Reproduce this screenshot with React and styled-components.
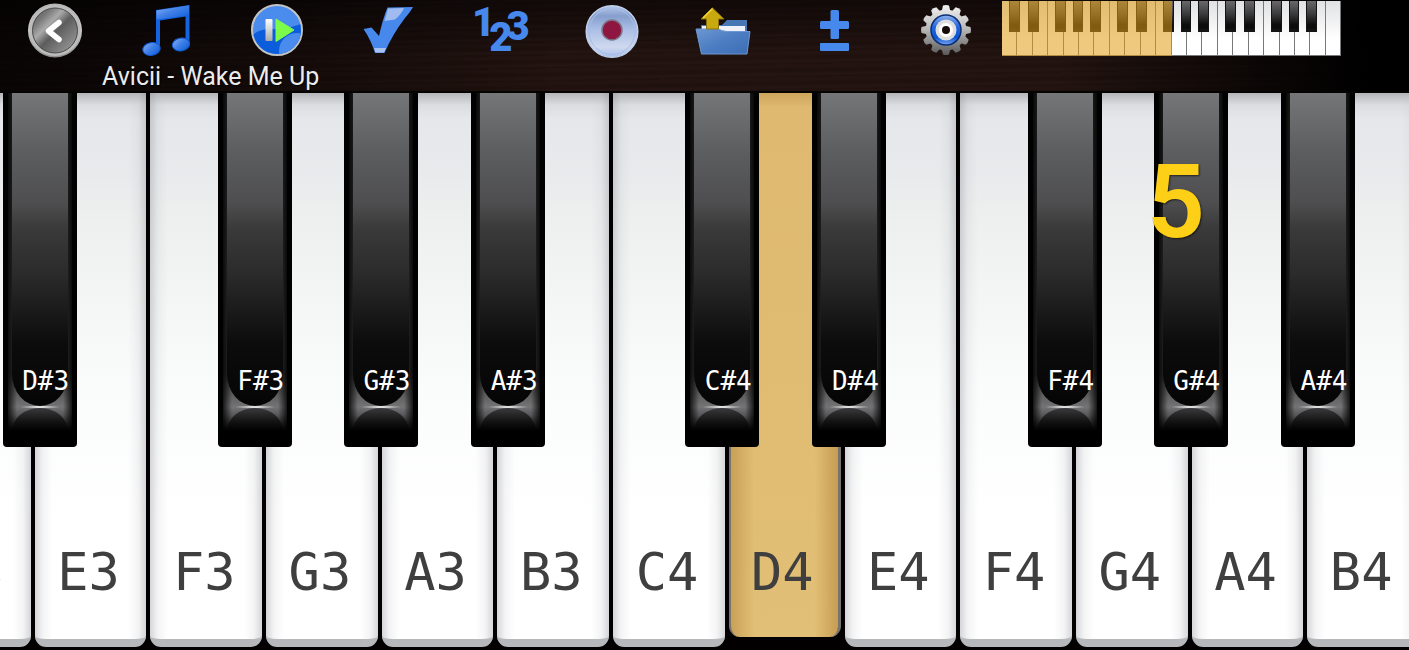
import React, { useState } from "react";
import styled, { createGlobalStyle, css } from "styled-components";

const Global = createGlobalStyle`
  body, html {
    margin: 0;
    background: #000;
  }
  * {
    box-sizing: border-box;
  }
`;

const App_ = styled.main`
  display: flex;
  flex-direction: column;
  min-height: 100vh;
  overflow: hidden;
  font-family: Roboto, sans-serif;
`;

const Header = styled.header`
  height: 93px;
  border-bottom: 2px solid #050202;
  background:
    linear-gradient(90deg, rgba(0, 0, 0, 0.75), rgba(0, 0, 0, 0.4) 22%, transparent 40%, transparent 75%, #000 97%),
    linear-gradient(180deg, rgba(0, 0, 0, 0.5), transparent 60%),
    repeating-linear-gradient(179deg, #231411 0 3px, #1f110e 5px 7px, #251613 10px, #1d100d 13px);
`;

const Toolbar = styled.div`
  display: grid;
  grid-template-columns: 71.1% 24.1% 1fr;
  height: 60px;
`;

const Actions = styled.nav`
  display: grid;
  grid-template-columns: repeat(9, 1fr);
  place-items: center;
`;

const IconButton = styled.button`
  display: flex;
  align-items: center;
  justify-content: center;
  width: 56px;
  height: 56px;
  padding: 0;
  border: none;
  background: transparent;
  cursor: pointer;

  svg {
    display: block;
    width: 56px;
    height: 56px;
    overflow: visible;
  }
`;

const Digits = styled.span`
  display: flex;
  font: 900 40px/40px Roboto, sans-serif;
  color: #4688ec;
`;

const Digit = styled.span`
  margin: ${({ $drop }) => $drop}px -3px 0;
`;

const Title = styled.h1`
  margin: 0 0 0 102px;
  font-size: 25px;
  font-weight: 400;
  line-height: 34px;
  color: #ececec;
  text-shadow: 1px 1px 1px #000;
`;

const Overview = styled.div`
  position: relative;
  display: grid;
  grid-template-columns: repeat(22, 1fr);
  height: 55px;
  margin-top: 1px;
`;

const MiniKey = styled.div`
  position: relative;
  border: solid #77797c;
  border-width: 0 1px 1px 0;
  background: linear-gradient(#e0e1e3, #fff 70%);
`;

const MiniSharp = styled.div`
  position: absolute;
  z-index: 1;
  top: 0;
  left: ${({ $left }) => $left}%;
  width: 72%;
  height: 57%;
  border: solid #141414;
  border-width: 0 1px 3px;
  background: linear-gradient(#69696b, #3c3c3e 45%, #0c0c0c 85%);
`;

const Range = styled.div`
  position: absolute;
  z-index: 2;
  inset: 0 50% 0 0;
  background: rgba(226, 158, 20, 0.55);
`;

const Board = styled.section`
  flex: 1;
  display: grid;
  grid-template-columns: repeat(13, 1fr);
  margin: 0 -12px 0 -83px;
  background: #020000;
`;

const Cell = styled.div`
  position: relative;
  display: flex;
  padding: 0 2px 3px;
`;

const pressed = css`
  height: calc(100% - 10px);
  padding-bottom: 35px;
  border: solid #77746d;
  border-width: 0 3px 0 2px;
  background:
    linear-gradient(90deg, rgba(170, 125, 50, 0.45), transparent 22%, transparent 78%, rgba(170, 125, 50, 0.5)),
    linear-gradient(#cda55c, #deb96f 14px, #e2bf76);
`;

const WhiteKey = styled.button`
  display: flex;
  flex-direction: column;
  justify-content: flex-end;
  width: 100%;
  padding: 0 4px 37px 0;
  border: none;
  border-bottom: 8px solid #b6b8bb;
  border-radius: 0 0 11px 11px;
  background:
    linear-gradient(90deg, rgba(150, 152, 160, 0.4), rgba(190, 192, 198, 0.18) 7%, transparent 16%, transparent 84%, rgba(190, 192, 198, 0.18) 93%, rgba(150, 152, 160, 0.4)),
    linear-gradient(#b4b5b8, #dcdde0 12px, #e6e7ea 26px, #e9eaec 80px, #eef0ef 130px, #fafbfb 290px, #fff 420px);
  font: 400 52px/60px "DejaVu Sans Mono", monospace;
  text-align: center;
  color: #3f3f3f;
  cursor: pointer;
  ${({ $down }) => $down && pressed}

  span {
    display: block;
    width: 100%;
  }
`;

const BlackKey = styled.button`
  position: absolute;
  z-index: 2;
  top: 0;
  left: ${({ $left }) => $left}%;
  display: flex;
  flex-direction: column;
  width: 64%;
  height: 63.6%;
  padding: 0 5px 16px;
  border: none;
  border-radius: 0 0 4px 4px;
  background: #000;
  cursor: pointer;
`;

const Bevel = styled.span`
  flex: 1;
  display: flex;
  flex-direction: column;
  padding: 0 4px;
  background:
    linear-gradient(90deg, rgba(0, 0, 0, 0.8), transparent 14%, transparent 86%, rgba(0, 0, 0, 0.8)),
    linear-gradient(#2a2a2a, #383838 200px, #333 280px, #747476 314px, #58585a 322px, #000);
`;

const Top = styled.span`
  flex: 1;
  display: flex;
  align-items: flex-end;
  justify-content: center;
  padding: 0 0 9px 12px;
  border-radius: 0 0 28px 28px / 0 0 32px 32px;
  background: linear-gradient(#757678, #5c5d5f 60px, #4e4e50 110px, #3a3a3a 135px, #2b2b2b 180px, #0c0c0c 250px, #050505);
  font: 400 26px/32px "DejaVu Sans Mono", monospace;
  white-space: nowrap;
  color: #fff;
`;

const Glint = styled.span`
  height: 2px;
  background: linear-gradient(90deg, transparent 15%, #ddd 45%, #ddd 55%, transparent 85%);
`;

const Dome = styled.span`
  height: 23px;
  border-radius: 50% 50% 0 0 / 100% 100% 0 0;
  background: linear-gradient(#3a3a3c, #121212 60%, #000);
`;

const Finger = styled.span`
  position: absolute;
  top: 58px;
  left: -7px;
  font: 600 102px/102px Roboto, sans-serif;
  color: #fdd017;
  text-shadow: 1px 1px 2px rgba(0, 0, 0, 0.6);
`;

const BackIcon = () => (
  <svg viewBox="0 0 56 56">
    <defs>
      <linearGradient id="steel" x1="0" y1="0" x2="1" y2="1">
        <stop offset="0" stopColor="#4c4c4c" />
        <stop offset=".25" stopColor="#777" />
        <stop offset=".38" stopColor="#aaa" />
        <stop offset=".52" stopColor="#5c5c5c" />
        <stop offset=".8" stopColor="#8e8e8e" />
        <stop offset="1" stopColor="#555" />
      </linearGradient>
      <linearGradient id="rim" x1="0" y1="0" x2="0" y2="1">
        <stop offset="0" stopColor="#b4b4b4" />
        <stop offset=".5" stopColor="#c9c9c9" />
        <stop offset="1" stopColor="#8e8e8e" />
      </linearGradient>
    </defs>
    <circle cx="27" cy="28.500" r="26" fill="url(#steel)" stroke="url(#rim)" strokeWidth="2" />
    <circle cx="27" cy="28.500" r="24" fill="none" stroke="#bdbdbd" strokeWidth="3" />
    <circle cx="27" cy="28.500" r="22.500" fill="none" stroke="#4b4b4b" strokeWidth="1" />
    <path d="M31 20.500 20.500 29 31 37.500" fill="none" stroke="#fff" strokeWidth="5.500" strokeLinecap="round" strokeLinejoin="round" />
  </svg>
);

const MusicIcon = () => (
  <svg viewBox="0 0 56 56">
    <defs>
      <linearGradient id="note" x1="0" y1="0" x2="1" y2="1">
        <stop offset="0" stopColor="#8fb2f2" />
        <stop offset=".45" stopColor="#4181e8" />
        <stop offset="1" stopColor="#0b5bd8" />
      </linearGradient>
    </defs>
    <path d="M17 8 50.500 3V42h-4V14.500L21 18.500V47h-4z" fill="#1463df" />
    <path d="M17.500 8.500 50 3.500V13L17.500 17.500z" fill="url(#note)" />
    <ellipse cx="12.500" cy="47" rx="8.800" ry="6.300" fill="url(#note)" stroke="#0d58cf" strokeWidth="1" transform="rotate(-10 12.500 47)" />
    <ellipse cx="42" cy="42.500" rx="8.800" ry="6.300" fill="url(#note)" stroke="#0d58cf" strokeWidth="1" transform="rotate(-10 42 42.500)" />
  </svg>
);

const PlayIcon = () => (
  <svg viewBox="0 0 56 56">
    <defs>
      <clipPath id="disc"><circle cx="27" cy="28" r="24" /></clipPath>
      <linearGradient id="bar" x1="0" y1="0" x2="0" y2="1">
        <stop offset="0" stopColor="#fff" />
        <stop offset="1" stopColor="#aaa" />
      </linearGradient>
    </defs>
    <circle cx="27" cy="28" r="25" fill="#4a8bee" stroke="#c3c3c3" strokeWidth="2" />
    <g clipPath="url(#disc)">
      <path d="M0 36C8 26 18 27 27 27S44 24 54 21V56H0z" fill="#0b5ddb" />
      <circle cx="47" cy="49" r="18" fill="#4a8bee" />
    </g>
    <rect x="15.500" y="17" width="7" height="22" rx="1" fill="url(#bar)" />
    <path d="M26 17 44 28 26 39.500z" fill="#7dfb4a" stroke="#7dfb4a" strokeWidth="1" strokeLinejoin="round" />
  </svg>
);

const CheckIcon = () => (
  <svg viewBox="0 0 56 56">
    <path d="M1.500 27 9.500 25.500 17 34Q21 16 25.500 5.500L51 5Q49 9 43 16Q30 33 22.500 51H13Q9 38 1.500 27z" fill="#4688ec" />
    <path d="M26 6.500 42 6Q39 13 33 17.500L22.500 19z" fill="#a9c1ef" opacity=".9" />
    <path d="M12 46H24L22 50.500H13.500z" fill="#a9c1ef" />
  </svg>
);

const RecordIcon = () => (
  <svg viewBox="0 0 56 56">
    <defs>
      <linearGradient id="glass" x1="0" y1="0" x2="0" y2="1">
        <stop offset="0" stopColor="#b4c8ee" />
        <stop offset=".2" stopColor="#879fcd" />
        <stop offset=".45" stopColor="#a9bde6" />
        <stop offset=".8" stopColor="#cfd9ef" />
        <stop offset="1" stopColor="#a6bdeb" />
      </linearGradient>
    </defs>
    <circle cx="28" cy="29.500" r="25.800" fill="url(#glass)" stroke="#c2cfea" strokeWidth="1.500" />
    <circle cx="28" cy="29.500" r="23" fill="none" stroke="#a9bde6" strokeWidth="1" />
    <circle cx="28" cy="28" r="10" fill="#8d1740" stroke="#7e7489" strokeWidth="1.500" />
  </svg>
);

const FolderIcon = () => (
  <svg viewBox="0 0 56 56">
    <defs>
      <linearGradient id="folder" x1="0" y1="0" x2="1" y2="1">
        <stop offset="0" stopColor="#6c97d2" />
        <stop offset=".5" stopColor="#4c7dc2" />
        <stop offset="1" stopColor="#3d6cb2" />
      </linearGradient>
    </defs>
    <path d="M5 23H26L31 18H51V34H5z" fill="#4877b6" />
    <path d="M6 24H49V30H6z" fill="#eef2f8" />
    <path d="M0 27H22Q26 29 31 29.500H54L51 52H5.500z" fill="url(#folder)" stroke="#6c97d2" strokeWidth="1" strokeLinejoin="round" />
    <path d="M16.500 6 28 17H22.500V27H10.500V17H5z" fill="#c9a910" stroke="#8d7305" strokeWidth="1" />
    <path d="M16.500 6.500 7 16" stroke="#fbd83c" strokeWidth="1.500" />
  </svg>
);

const PlusMinusIcon = () => (
  <svg viewBox="0 0 56 56" fill="#4688ec">
    <rect x="13" y="19" width="29" height="8" rx="1.500" />
    <rect x="23.500" y="8" width="8.500" height="29" rx="1.500" />
    <rect x="13" y="41" width="29" height="8" rx="1" />
  </svg>
);

const GearIcon = () => (
  <svg viewBox="0 0 56 56">
    <defs>
      <linearGradient id="gear" gradientUnits="userSpaceOnUse" x1="0" y1="3" x2="0" y2="53">
        <stop offset="0" stopColor="#f2f2f2" />
        <stop offset=".5" stopColor="#b5b5b5" />
        <stop offset="1" stopColor="#5a5a5a" />
      </linearGradient>
      <linearGradient id="ring" x1="0" y1="0" x2="0" y2="1">
        <stop offset="0" stopColor="#8db1ee" />
        <stop offset=".4" stopColor="#2366dc" />
        <stop offset=".75" stopColor="#0a56d4" />
        <stop offset="1" stopColor="#7ba6f0" />
      </linearGradient>
      <mask id="teeth">
        <circle cx="28" cy="28" r="20.500" fill="#fff" />
        {[...Array(12)].map((_, i) => (
          <path key={i} d="M23.500 10 25 3.500Q28 2.500 31 3.500L32.500 10z" fill="#fff" transform={`rotate(${i * 30} 28 28)`} />
        ))}
      </mask>
    </defs>
    <rect width="56" height="56" fill="url(#gear)" mask="url(#teeth)" />
    <circle cx="28" cy="28" r="15" fill="url(#ring)" stroke="#0b2f76" strokeWidth="1.500" />
    <circle cx="28" cy="28" r="10.500" fill="#dedede" />
    <circle cx="28" cy="28" r="7" fill="#fff" />
    <circle cx="28" cy="28" r="4" fill="#160b09" />
  </svg>
);

const NumbersIcon = () => (
  <Digits>
    <Digit $drop={0}>1</Digit>
    <Digit $drop={15}>2</Digit>
    <Digit $drop={4}>3</Digit>
  </Digits>
);

const actions = [
  ["Back", BackIcon],
  ["Songs", MusicIcon],
  ["Play", PlayIcon],
  ["Check", CheckIcon],
  ["Finger numbers", NumbersIcon],
  ["Record", RecordIcon],
  ["Open", FolderIcon],
  ["Zoom", PlusMinusIcon],
  ["Settings", GearIcon],
];

const notes = ["D3", "E3", "F3", "G3", "A3", "B3", "C4", "D4", "E4", "F4", "G4", "A4", "B4"];

// how far into its white key each sharp starts, in percent
const sharps = { C: 64, D: 74, F: 60, G: 69, A: 79 };
const miniSharps = { C: 52, D: 76, F: 50, G: 63, A: 79 };

const App = () => {
  const [down, setDown] = useState("D4");
  const finger = "G#4";

  return (
    <App_>
      <Global />
      <Header>
        <Toolbar>
          <Actions>
            {actions.map(([label, Icon]) => (
              <IconButton key={label} aria-label={label}>
                <Icon />
              </IconButton>
            ))}
          </Actions>
          <Overview>
            {[..."CDEFGABCDEFGABCDEFGABC"].map((n, i) => (
              <MiniKey key={i}>
                {miniSharps[n] && i < 21 && <MiniSharp $left={miniSharps[n]} />}
              </MiniKey>
            ))}
            <Range />
          </Overview>
        </Toolbar>
        <Title>Avicii - Wake Me Up</Title>
      </Header>
      <Board>
        {notes.map((note) => {
          const sharp = `${note[0]}#${note[1]}`;
          return (
            <Cell key={note}>
              <WhiteKey $down={down === note} onClick={() => setDown(note)}>
                <span>{note}</span>
              </WhiteKey>
              {sharps[note[0]] && (
                <BlackKey $left={sharps[note[0]]} onClick={() => setDown(sharp)}>
                  <Bevel>
                    <Top>{sharp}</Top>
                    <Glint />
                    <Dome />
                  </Bevel>
                  {sharp === finger && <Finger>5</Finger>}
                </BlackKey>
              )}
            </Cell>
          );
        })}
      </Board>
    </App_>
  );
};

export default App;
